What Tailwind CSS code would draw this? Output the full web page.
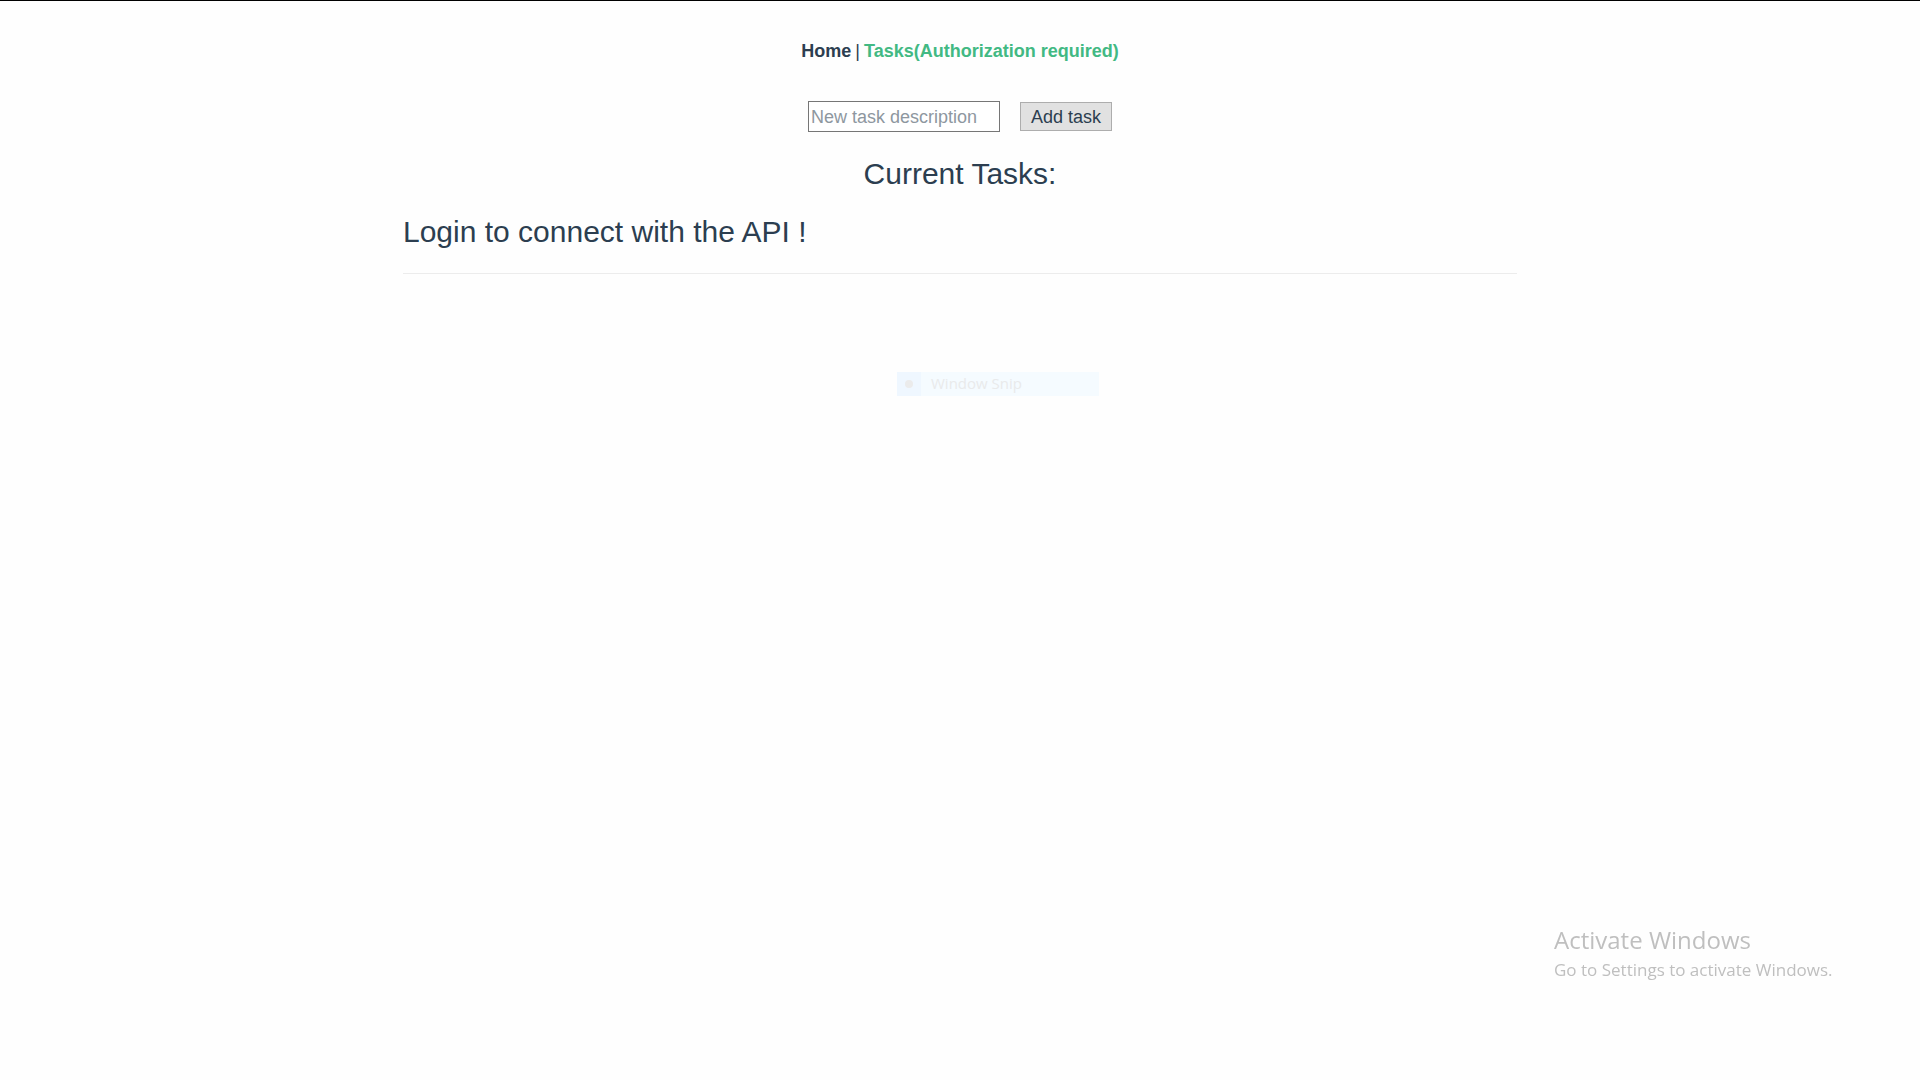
<!DOCTYPE html>
<html lang="en">
<head>
<meta charset="utf-8">
<title>Tasks</title>
<script src="https://cdn.jsdelivr.net/npm/@tailwindcss/browser@4"></script>
</head>
<body class="relative min-h-screen border-t border-black bg-[#fefefe] font-['Liberation_Sans',Arial,sans-serif] text-lg text-[#2c3e50]">
  <nav class="flex justify-center gap-1 pt-9 leading-7">
    <a href="#" class="font-bold">Home</a>
    <span>|</span>
    <a href="#" class="font-bold text-[#42b983]">Tasks(Authorization required)</a>
  </nav>
  <main class="mx-auto max-w-[1114px]">
    <form class="mt-9 flex items-center justify-center gap-5">
      <input type="text" aria-label="New task description" placeholder="New task description" class="h-[31px] w-[192px] border border-[#767676] bg-white px-0.5 pt-0.5 placeholder:text-[#8e979f]">
      <button type="button" class="h-[29px] w-[92px] border border-[#adadad] bg-[#e1e1e1] leading-none">Add task</button>
    </form>
    <h2 class="mt-6 text-center text-3xl">Current Tasks:</h2>
    <h2 class="mt-[22px] text-3xl">Login to connect with the API !</h2>
    <hr class="mt-[23px] border-[#ececec]">
  </main>

  <!-- Fading menu item -->
  <div class="absolute top-[371px] left-[calc(50%-63px)] flex h-6 w-[202px] items-center bg-[#f5fbff] font-['Open_Sans',sans-serif] text-[15px] text-[#e9eaeb]">
    <span class="flex h-full w-6 items-center justify-center bg-[#eff7ff]"><span class="size-2 rounded-full bg-[#ebebeb]"></span></span>
    <span class="pl-2.5">Window Snip</span>
  </div>

  <!-- Activation watermark -->
  <aside class="fixed right-20 bottom-24 w-[286px] font-['Open_Sans',sans-serif] whitespace-nowrap text-[#bfbfbf]">
    <p class="text-2xl">Activate Windows</p>
    <p class="text-[17px] leading-7">Go to Settings to activate Windows.</p>
  </aside>
</body>
</html>
